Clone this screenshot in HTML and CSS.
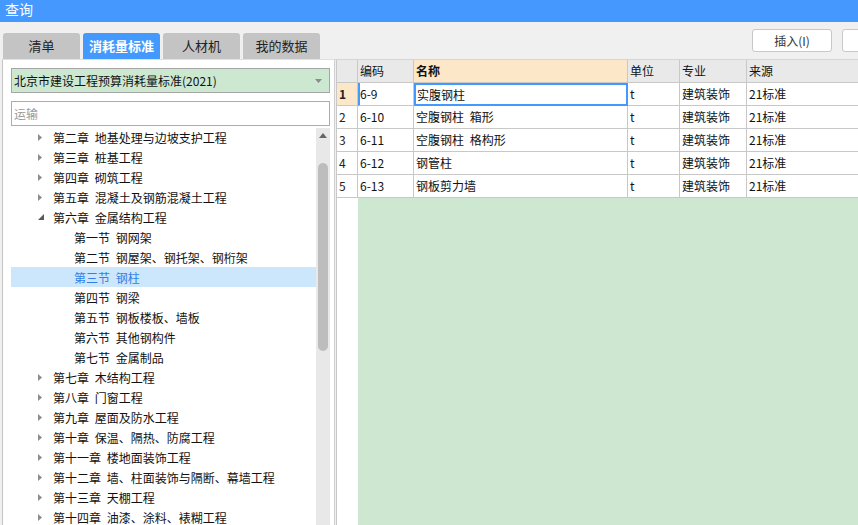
FILE: index.html
```html
<!DOCTYPE html>
<html lang="zh">
<head>
<meta charset="utf-8">
<title>查询</title>
<link rel="stylesheet" href="styles.css">
</head>
<body>
<div class="titlebar">查询</div>
<div class="main">
  <div class="left">
    <div class="tabs">
      <div class="tab">清单</div>
      <div class="tab active">消耗量标准</div>
      <div class="tab">人材机</div>
      <div class="tab">我的数据</div>
    </div>
    <div class="panel">
      <div class="select">
        <span>北京市建设工程预算消耗量标准(2021)</span>
        <svg class="caret" width="7" height="4" viewBox="0 0 7 4"><path d="M0 0H7L3.5 4Z" fill="#8a8a8a"/></svg>
      </div>
      <div class="search">运输</div>
      <div class="treewrap">
        <div class="tree">
          <div class="node"><span class="tw"><svg width="4" height="7" viewBox="0 0 4 7"><path d="M0 0L4 3.5L0 7Z" fill="#8c8c8c"/></svg></span>第二章 地基处理与边坡支护工程</div>
          <div class="node"><span class="tw"><svg width="4" height="7" viewBox="0 0 4 7"><path d="M0 0L4 3.5L0 7Z" fill="#8c8c8c"/></svg></span>第三章 桩基工程</div>
          <div class="node"><span class="tw"><svg width="4" height="7" viewBox="0 0 4 7"><path d="M0 0L4 3.5L0 7Z" fill="#8c8c8c"/></svg></span>第四章 砌筑工程</div>
          <div class="node"><span class="tw"><svg width="4" height="7" viewBox="0 0 4 7"><path d="M0 0L4 3.5L0 7Z" fill="#8c8c8c"/></svg></span>第五章 混凝土及钢筋混凝土工程</div>
          <div class="node"><span class="tw"><svg width="6" height="6" viewBox="0 0 6 6"><path d="M6 0V6H0Z" fill="#595959"/></svg></span>第六章 金属结构工程</div>
          <div class="node sec">第一节 钢网架</div>
          <div class="node sec">第二节 钢屋架、钢托架、钢桁架</div>
          <div class="node sec selected">第三节 钢柱</div>
          <div class="node sec">第四节 钢梁</div>
          <div class="node sec">第五节 钢板楼板、墙板</div>
          <div class="node sec">第六节 其他钢构件</div>
          <div class="node sec">第七节 金属制品</div>
          <div class="node"><span class="tw"><svg width="4" height="7" viewBox="0 0 4 7"><path d="M0 0L4 3.5L0 7Z" fill="#8c8c8c"/></svg></span>第七章 木结构工程</div>
          <div class="node"><span class="tw"><svg width="4" height="7" viewBox="0 0 4 7"><path d="M0 0L4 3.5L0 7Z" fill="#8c8c8c"/></svg></span>第八章 门窗工程</div>
          <div class="node"><span class="tw"><svg width="4" height="7" viewBox="0 0 4 7"><path d="M0 0L4 3.5L0 7Z" fill="#8c8c8c"/></svg></span>第九章 屋面及防水工程</div>
          <div class="node"><span class="tw"><svg width="4" height="7" viewBox="0 0 4 7"><path d="M0 0L4 3.5L0 7Z" fill="#8c8c8c"/></svg></span>第十章 保温、隔热、防腐工程</div>
          <div class="node"><span class="tw"><svg width="4" height="7" viewBox="0 0 4 7"><path d="M0 0L4 3.5L0 7Z" fill="#8c8c8c"/></svg></span>第十一章 楼地面装饰工程</div>
          <div class="node"><span class="tw"><svg width="4" height="7" viewBox="0 0 4 7"><path d="M0 0L4 3.5L0 7Z" fill="#8c8c8c"/></svg></span>第十二章 墙、柱面装饰与隔断、幕墙工程</div>
          <div class="node"><span class="tw"><svg width="4" height="7" viewBox="0 0 4 7"><path d="M0 0L4 3.5L0 7Z" fill="#8c8c8c"/></svg></span>第十三章 天棚工程</div>
          <div class="node"><span class="tw"><svg width="4" height="7" viewBox="0 0 4 7"><path d="M0 0L4 3.5L0 7Z" fill="#8c8c8c"/></svg></span>第十四章 油漆、涂料、裱糊工程</div>
        </div>
        <div class="scrollbar">
          <svg class="up" width="8" height="5" viewBox="0 0 8 5"><path d="M0 5L4 0L8 5Z" fill="#666"/></svg>
          <div class="thumb"></div>
        </div>
      </div>
    </div>
  </div>
  <div class="right">
    <div class="toolbar">
      <div class="btn">插入(I)</div>
      <div class="btn"></div>
    </div>
    <div class="grid">
      <div class="row head">
        <div class="c rn"></div>
        <div class="c code">编码</div>
        <div class="c name namehead">名称</div>
        <div class="c unit">单位</div>
        <div class="c major">专业</div>
        <div class="c src">来源</div>
      </div>
      <div class="row cur">
        <div class="c rn">1</div>
        <div class="c code">6-9</div>
        <div class="c name sel">实腹钢柱</div>
        <div class="c unit">t</div>
        <div class="c major">建筑装饰</div>
        <div class="c src">21标准</div>
      </div>
      <div class="row">
        <div class="c rn">2</div>
        <div class="c code">6-10</div>
        <div class="c name">空腹钢柱 箱形</div>
        <div class="c unit">t</div>
        <div class="c major">建筑装饰</div>
        <div class="c src">21标准</div>
      </div>
      <div class="row">
        <div class="c rn">3</div>
        <div class="c code">6-11</div>
        <div class="c name">空腹钢柱 格构形</div>
        <div class="c unit">t</div>
        <div class="c major">建筑装饰</div>
        <div class="c src">21标准</div>
      </div>
      <div class="row">
        <div class="c rn">4</div>
        <div class="c code">6-12</div>
        <div class="c name">钢管柱</div>
        <div class="c unit">t</div>
        <div class="c major">建筑装饰</div>
        <div class="c src">21标准</div>
      </div>
      <div class="row">
        <div class="c rn">5</div>
        <div class="c code">6-13</div>
        <div class="c name">钢板剪力墙</div>
        <div class="c unit">t</div>
        <div class="c major">建筑装饰</div>
        <div class="c src">21标准</div>
      </div>
      <div class="filler">
        <div class="fill-rn"></div>
        <div class="fill-green"></div>
      </div>
    </div>
  </div>
</div>
</body>
</html>
```
FILE: styles.css
```css
* { box-sizing: border-box; }
html, body { margin: 0; padding: 0; }
body {
  width: 858px;
  height: 525px;
  overflow: hidden;
  background: #f0f0f0;
  font-family: "Noto Sans CJK SC", "Liberation Sans", sans-serif;
  font-size: 12px;
  color: #111;
}
.titlebar {
  height: 22px;
  background: #4599fe;
  color: #fff;
  font-size: 14px;
  line-height: 19px;
  padding-left: 5px;
}
.main {
  display: flex;
  height: 503px;
}
.left {
  width: 335px;
  display: flex;
  flex-direction: column;
  padding-left: 2px;
}
.tabs {
  display: flex;
  gap: 3px;
  padding-top: 11px;
  padding-left: 1px;
  height: 37px;
}
.tab {
  width: 77px;
  height: 26px;
  background: #c4c4c4;
  border-radius: 3px 3px 0 0;
  text-align: center;
  line-height: 26px;
  font-size: 13px;
  color: #222;
}
.tab.active {
  background: #4499fe;
  color: #fff;
  font-weight: bold;
}
.panel {
  flex: 1;
  background: #fff;
  border-left: 1px solid #c4c4c4;
  border-right: 1px solid #cfcfcf;
  border-top: 1px solid #e0e0e0;
  padding: 8px 4px 0 8px;
  display: flex;
  flex-direction: column;
  min-height: 0;
}
.select {
  height: 25px;
  background: #cde8d1;
  border: 1px solid #a6a6a6;
  display: flex;
  align-items: center;
  justify-content: space-between;
  padding: 0 7px 0 2px;
  font-size: 12px;
  color: #111;
}
.caret { display: block; }
.search {
  margin-top: 8px;
  height: 25px;
  border: 1px solid #acacac;
  color: #9a9a9a;
  line-height: 23px;
  padding-left: 2px;
}
.treewrap {
  flex: 1;
  display: flex;
  margin-top: 2px;
  min-height: 0;
  overflow: hidden;
}
.tree {
  flex: 1;
  margin-top: -1px;
}
.node {
  height: 20px;
  display: flex;
  align-items: center;
  padding-left: 27px;
  white-space: pre;
  word-spacing: 3px;
  color: #111;
}
.tw {
  width: 15px;
  display: flex;
  align-items: center;
}
.tw svg { display: block; }
.node.sec { padding-left: 63px; }
.node.selected {
  background: #cce6fc;
  color: #2f7fe6;
}
.scrollbar {
  width: 14px;
  background: #e8e8e8;
  display: flex;
  flex-direction: column;
  align-items: center;
  padding-top: 5px;
}
.up { display: block; }
.thumb {
  width: 10px;
  height: 188px;
  margin-top: 25px;
  background: #bdbdbd;
  border-radius: 5px;
}
.right {
  flex: 1;
  display: flex;
  flex-direction: column;
  min-width: 0;
}
.toolbar {
  height: 38px;
  border-bottom: 1px solid #d6d6d6;
  display: flex;
  gap: 10px;
  padding: 7px 0 0 417px;
  overflow: hidden;
}
.btn {
  flex: none;
  width: 80px;
  height: 23px;
  background: #fff;
  border: 1px solid #c9c9c9;
  border-radius: 3px;
  text-align: center;
  line-height: 21px;
  color: #333;
  font-size: 12px;
}
.grid {
  flex: 1;
  margin-left: 1px;
  border-left: 1px solid #c8c8c8;
  display: flex;
  flex-direction: column;
  background: #fff;
}
.row {
  display: flex;
  height: 23px;
}
.c {
  height: 23px;
  border-right: 1px solid #c8c8c8;
  border-bottom: 1px solid #c8c8c8;
  line-height: 22px;
  padding-left: 2px;
  white-space: pre;
  word-spacing: 3px;
  flex: none;
}
.rn { width: 21px; color: #222; }
.code { width: 56px; }
.name { width: 214px; }
.unit { width: 52px; }
.major { width: 67px; }
.src { flex: 1; border-right: none; }
.head .c { background: #e9e9e9; }
.head .namehead { background: #fde7c9; font-weight: bold; }
.cur .rn { background: #fde7c9; font-weight: bold; }
.cur .code { border-left: 2px solid #4499fe; padding-left: 0; }
.sel {
  border: 2px solid #4499fe;
  line-height: 19px;
  padding-left: 1px;
}
.filler {
  flex: 1;
  display: flex;
}
.fill-rn { width: 21px; background: #fff; }
.fill-green { flex: 1; background: #cde7d0; }
```
